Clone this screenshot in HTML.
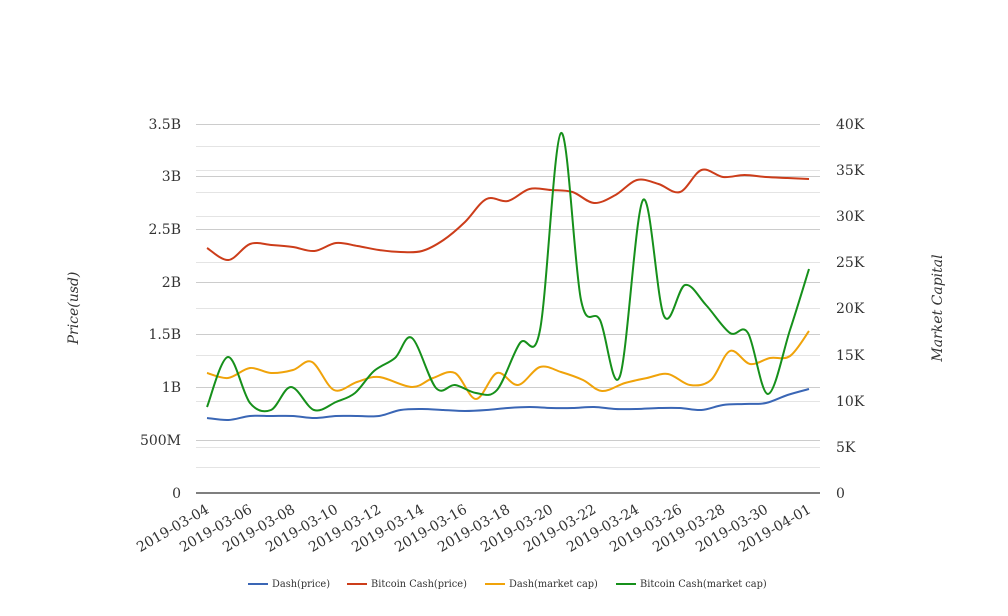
<!DOCTYPE html>
<html><head><meta charset="utf-8"><style>
body{margin:0;background:#fff;width:1008px;height:616px;overflow:hidden}
svg{display:block}
text{font-family:"DejaVu Serif","Liberation Serif",serif;fill:#333}
</style></head><body>
<svg id="s" width="1008" height="616" xmlns="http://www.w3.org/2000/svg">
<g stroke="#ccc" stroke-width="1">
<line x1="196" x2="820" y1="124.5" y2="124.5"/><line x1="196" x2="820" y1="176.5" y2="176.5"/><line x1="196" x2="820" y1="229.5" y2="229.5"/><line x1="196" x2="820" y1="282.5" y2="282.5"/><line x1="196" x2="820" y1="334.5" y2="334.5"/><line x1="196" x2="820" y1="387.5" y2="387.5"/><line x1="196" x2="820" y1="440.5" y2="440.5"/>
</g>
<g stroke="#e4e4e4" stroke-width="1">
<line x1="196" x2="820" y1="146.5" y2="146.5"/><line x1="196" x2="820" y1="170.5" y2="170.5"/><line x1="196" x2="820" y1="192.5" y2="192.5"/><line x1="196" x2="820" y1="216.5" y2="216.5"/><line x1="196" x2="820" y1="262.5" y2="262.5"/><line x1="196" x2="820" y1="308.5" y2="308.5"/><line x1="196" x2="820" y1="355.5" y2="355.5"/><line x1="196" x2="820" y1="401.5" y2="401.5"/><line x1="196" x2="820" y1="447.5" y2="447.5"/><line x1="196" x2="820" y1="467.5" y2="467.5"/>
</g>
<line x1="196" x2="820" y1="493" y2="493" stroke="#333" stroke-width="1.2"/>
<g font-size="14" text-anchor="end">
<text x="181" y="129">3.5B</text><text x="181" y="181">3B</text><text x="181" y="234">2.5B</text><text x="181" y="287">2B</text><text x="181" y="339">1.5B</text><text x="181" y="392">1B</text><text x="181" y="445">500M</text><text x="181" y="498">0</text>
</g>
<g font-size="14">
<text x="836" y="129">40K</text><text x="836" y="175">35K</text><text x="836" y="221">30K</text><text x="836" y="267">25K</text><text x="836" y="313">20K</text><text x="836" y="360">15K</text><text x="836" y="406">10K</text><text x="836" y="452">5K</text><text x="836" y="498">0</text>
</g>
<text font-size="14" font-style="italic" transform="translate(78,308) rotate(-90)" text-anchor="middle">Price(usd)</text>
<text font-size="14" font-style="italic" transform="translate(942,308) rotate(-90)" text-anchor="middle">Market Capital</text>
<g id="dates" font-size="14" text-anchor="end"></g>
<g id="lines" fill="none" stroke-width="2"></g>
<g font-size="9.8">
<line x1="248" x2="268" y1="584" y2="584" stroke="#3a66b5" stroke-width="2"/><text x="272" y="587">Dash(price)</text>
<line x1="347" x2="367" y1="584" y2="584" stroke="#cc3d1a" stroke-width="2"/><text x="371" y="587">Bitcoin Cash(price)</text>
<line x1="485" x2="505" y1="584" y2="584" stroke="#f0a30a" stroke-width="2"/><text x="509" y="587">Dash(market cap)</text>
<line x1="616" x2="636" y1="584" y2="584" stroke="#16901b" stroke-width="2"/><text x="640" y="587">Bitcoin Cash(market cap)</text>
</g>
</svg>
<script>
var NS="http://www.w3.org/2000/svg";
var d=document.getElementById("dates");
var labs=["2019-03-04","2019-03-06","2019-03-08","2019-03-10","2019-03-12","2019-03-14","2019-03-16","2019-03-18","2019-03-20","2019-03-22","2019-03-24","2019-03-26","2019-03-28","2019-03-30","2019-04-01"];
labs.forEach(function(l,i){var x=210+i*43;var t=document.createElementNS(NS,"text");t.setAttribute("transform","translate("+x+",512) rotate(-30)");t.textContent=l;d.appendChild(t);});
function path(p){var s="M"+p[0][0]+","+p[0][1];for(var i=0;i<p.length-1;i++){var a=p[i-1]||p[i],b=p[i],c=p[i+1],e=p[i+2]||c;var k=6;s+=" C"+(b[0]+(c[0]-a[0])/k)+","+(b[1]+(c[1]-a[1])/k)+" "+(c[0]-(e[0]-b[0])/k)+","+(c[1]-(e[1]-b[1])/k)+" "+c[0]+","+c[1];}return s;}
function grid(ys){return ys.map(function(y,i){return[207+21.5*i,y]});}
var series=[
["#3a66b5",grid([418,420,416,416,416,418,416,416,416,410,409,410,411,410,408,407,408,408,407,409,409,408,408,410,405,404,403,395,389])],
["#cc3d1a",grid([248,260,244,245,247,251,243,246,250,252,251,240,222,199,201,189,190,192,203,195,180,184,192,170,177,175,177,178,179])],
["#f0a30a",[[207,373],[228,378],[250,368],[271,373],[293,370],[312,362],[334,390],[357,382],[379,377],[412,387],[433,378],[455,373],[476,399],[497,373],[518,385],[540,367],[561,372],[583,380],[602,391],[625,383],[647,378],[668,374],[690,385],[711,380],[730,351],[750,364],[770,358],[790,356],[809,331]]],
["#16901b",[[207,407],[228,357],[250,403],[271,410],[291,387],[314,410],[336,402],[355,393],[374,371],[395,358],[412,338],[436,388],[455,385],[476,393],[497,390],[520,343],[540,330],[561,133],[581,300],[600,320],[620,376],[643,200],[664,316],[685,285],[706,305],[730,333],[748,333],[768,394],[790,330],[809,269]]]
];
var g=document.getElementById("lines");
series.forEach(function(s){var p=document.createElementNS(NS,"path");p.setAttribute("d",path(s[1]));p.setAttribute("stroke",s[0]);g.appendChild(p);});
</script>
</body></html>
